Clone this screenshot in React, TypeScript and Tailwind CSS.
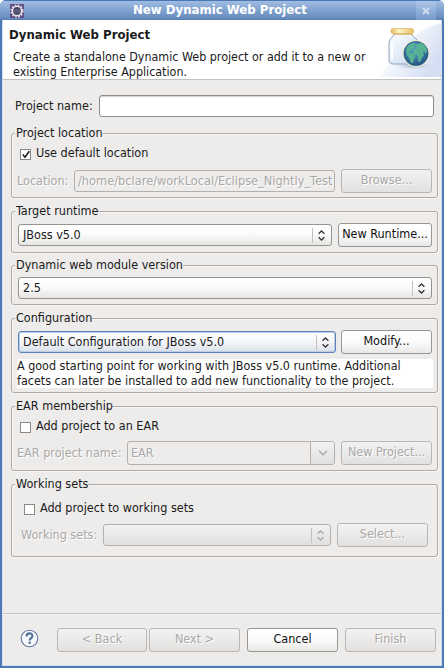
import React from "react";

type Kids = { children?: React.ReactNode };

function Group({ title, className, children }: Kids & { title: string; className: string }) {
  return (
    <section
      className={`ml-[8px] w-[427px] shrink-0 rounded-[3px] border border-[#adaaa7] shadow-[inset_1px_1px_0_#f7f6f5,1px_1px_0_#f7f6f5] ${className}`}
    >
      <h2 className="ml-[3px] -mt-[9px] h-[16px] w-fit bg-[#edeceb] pl-[1px] text-[12.5px] leading-[16px]">{title}</h2>
      {children}
    </section>
  );
}

function Button({ children, disabled, className }: Kids & { disabled?: boolean; className: string }) {
  return (
    <button
      className={`h-[24px] shrink-0 whitespace-nowrap rounded-[3px] border pb-[2px] text-center text-[12.5px] leading-[20px] ${
        disabled
          ? "border-[#b9b6b3] bg-linear-to-b from-[#f3f2f2] to-[#e2e1e0] text-[#aaa8a6] [text-shadow:1px_1px_0_#fff]"
          : "border-[#999693] bg-linear-to-b from-white via-[#fbfbfb] to-[#e9e8e7] text-[#111]"
      } ${className}`}
    >
      {children}
    </button>
  );
}

function Select({
  children,
  tone = "normal",
  className,
}: Kids & { tone?: "normal" | "focus" | "off"; className: string }) {
  const tones = {
    normal: "border-[#979490] bg-linear-to-b from-white via-[#fafafa] to-[#e6e5e4]",
    focus: "border-[#5c83b8] bg-linear-to-b from-white via-[#f4f6f9] to-[#d9dfe8] shadow-[inset_0_0_0_1px_#bccde5]",
    off: "border-[#b3b0ad] bg-linear-to-b from-[#f3f2f2] to-[#e1e0df]",
  };
  return (
    <div className={`flex h-[22px] shrink-0 items-center rounded-[3px] border pl-[4px] ${tones[tone]} ${className}`}>
      <span className="flex-1 whitespace-nowrap text-[12.5px] leading-[20px]">{children}</span>
      <span className="h-[15px] w-px bg-[#c2bfbd]" />
      <svg
        className="ml-[5px] mr-[6px]"
        width="7"
        height="11"
        viewBox="0 0 7 11"
        fill="none"
        stroke={tone === "off" ? "#aaa8a6" : "#333"}
        strokeWidth="1.3"
      >
        <path d="M0.6 3.8 3.5 1l2.9 2.8M0.6 7.2 3.5 10l2.9-2.8" />
      </svg>
    </div>
  );
}

function Check({ children, checked, className }: Kids & { checked?: boolean; className: string }) {
  return (
    <label className={`flex h-[16px] items-center gap-[5px] text-[12.5px] leading-[16px] ${className}`}>
      <span className="mt-[2px] flex h-[11px] w-[11px] items-center justify-center border border-[#8b8885] bg-white">
        {checked && (
          <svg className="shrink-0" width="8" height="9" viewBox="0 0 8 9" fill="none" stroke="#222" strokeWidth="1.6">
            <path d="M0.8 4.5 3 7.2 7.3 1.2" />
          </svg>
        )}
      </span>
      <span className="whitespace-nowrap">{children}</span>
    </label>
  );
}

function DimLabel({ children, className }: Kids & { className: string }) {
  return (
    <span
      className={`shrink-0 whitespace-nowrap leading-[22px] text-[#aaa8a6] [text-shadow:1px_1px_0_#fff] ${className}`}
    >
      {children}
    </span>
  );
}

function GearIcon() {
  return (
    <svg className="ml-[10px] shrink-0" width="14" height="14" viewBox="0 0 14 14">
      <rect width="14" height="14" fill="#5d4f86" />
      <circle cx="7" cy="7" r="5.9" fill="none" stroke="#e8e3ea" strokeWidth="1.5" strokeDasharray="1.7 1.39" />
      <circle cx="7" cy="7" r="4.6" fill="#4b4468" stroke="#efecef" strokeWidth="1.4" />
      <path d="M3.5 6h7M3.3 8h7.4" stroke="#76809e" strokeWidth="0.7" />
    </svg>
  );
}

function JarIcon() {
  return (
    <svg className="mt-[2px] shrink-0" width="62" height="56" viewBox="0 0 62 56">
      <defs>
        <linearGradient id="swoosh" x1="0" y1="0" x2="1" y2="0.6">
          <stop offset="0.3" stopColor="#fff" />
          <stop offset="1" stopColor="#d4def3" />
        </linearGradient>
        <linearGradient id="glass" x1="0" y1="0" x2="1" y2="1">
          <stop offset="0" stopColor="#fff" />
          <stop offset="0.3" stopColor="#eef4fb" />
          <stop offset="1" stopColor="#c3d7ec" />
        </linearGradient>
        <linearGradient id="lid" x1="0" y1="0" x2="1" y2="0">
          <stop offset="0" stopColor="#e2b65a" />
          <stop offset="0.35" stopColor="#fff6cc" />
          <stop offset="1" stopColor="#e6bd64" />
        </linearGradient>
        <radialGradient id="sea" cx="0.45" cy="0.35" r="0.7">
          <stop offset="0" stopColor="#5f9fc6" />
          <stop offset="1" stopColor="#1d4f80" />
        </radialGradient>
        <radialGradient id="ground">
          <stop offset="0" stopColor="#98a5bc" />
          <stop offset="1" stopColor="#dbe3f3" stopOpacity="0" />
        </radialGradient>
      </defs>
      <path d="M62 1C49 4 38 11 27 22 16 33 9 44 0 55h62z" fill="url(#swoosh)" />
      <g transform="translate(2 0)">
        <ellipse cx="33" cy="43.500" rx="20" ry="4.500" fill="url(#ground)" />
        <path
          d="M13 12h18c0 3 6 4 6 10v16c0 3-2 4-5 4H13c-3 0-5-1-5-4V22c0-6 5-7 5-10z"
          fill="url(#glass)"
          stroke="#8fa2bd"
        />
        <path d="M11 22v16" stroke="#fff" strokeWidth="2" />
        <rect x="12" y="10" width="20" height="3" rx="1" fill="#dcc086" />
        <rect x="10" y="6.500" width="22.500" height="5" rx="2" fill="url(#lid)" stroke="#dfb765" strokeWidth="0.8" />
        <circle cx="35" cy="31.500" r="13.5" fill="#f4f1d2" />
        <circle cx="35" cy="31.500" r="12.2" fill="url(#sea)" stroke="#2c5d84" strokeWidth="0.6" />
        <path
          d="M26 25c2-3 5-4 8-4l1 2-2 1 1 2-3 1-1 2h-2l1 2 3 0 3 3-2 3-1 4h-2l-2-5-2-3-1-3zM36 22l5-1c3 2 5 5 5 8l-1 3-2-3-1 2 1 2-2 3-2 4-2-1v-4l-1-2-3-1-1-3 2-2 2-1-1-2z"
          fill="#55b394"
        />
      </g>
    </svg>
  );
}

export default function App() {
  return (
    <div className="h-[668px] w-[444px] overflow-hidden bg-white font-['DejaVu_Sans_Condensed','DejaVu_Sans',sans-serif] [font-stretch:condensed] text-[12.5px] text-[#1a1a1a]">
      <div className="flex h-full w-full flex-col overflow-hidden rounded-t-[6px] bg-[#4c7ab5]">
        <header className="flex h-[20px] shrink-0 items-center border-t border-[#4a78b2] bg-linear-to-b from-[#a0bce2] to-[#6087ba] shadow-[inset_0_-1px_0_#587fb3]">
          <GearIcon />
          <h1 className="ml-[24px] flex-1 pb-px pl-[85px] font-['DejaVu_Sans',sans-serif] text-[11.75px] leading-[16px] font-bold whitespace-nowrap text-white [font-stretch:normal]">
            New Dynamic Web Project
          </h1>
          <span className="mr-[8px] flex h-[19px] w-[20px] items-center justify-center bg-linear-to-b from-[#adc6e8] to-[#769bcb]">
            <svg width="8" height="8" viewBox="0 0 8 8" stroke="#cfdcf0" strokeWidth="2.2">
              <path d="M1 1l6 6M7 1 1 7" />
            </svg>
          </span>
        </header>

        <div className="mr-[2px] mb-[2px] ml-[2px] flex min-h-0 flex-1 flex-col border-x border-b border-[#d5dfec] bg-[#edeceb]">
          <div className="flex h-[60px] shrink-0 justify-between border-b border-[#c4c2c0] bg-white">
            <div className="pt-[7px] pl-[6px]">
              <h2 className="font-['DejaVu_Sans',sans-serif] text-[11.75px] leading-[16px] font-bold whitespace-nowrap [font-stretch:normal]">
                Dynamic Web Project
              </h2>
              <p className="mt-[7px] ml-[4px] text-[12.4px] leading-[14.5px] whitespace-nowrap">
                Create a standalone Dynamic Web project or add it to a new or
                <br />
                existing Enterprise Application.
              </p>
            </div>
            <JarIcon />
          </div>

          <div className="mt-[15px] flex h-[22px] shrink-0 items-center">
            <span className="w-[96px] pb-px pl-[12px] leading-[20px] whitespace-nowrap">Project name:</span>
            <span className="h-[22px] w-[335px] rounded-[3px] border border-[#8e8b88] bg-white shadow-[inset_0_1px_0_#d6d4d2]" />
          </div>

          <Group title="Project location" className="mt-[16px] h-[65px]">
            <Check checked className="mt-[4px] ml-[8px]">
              Use default location
            </Check>
            <div className="mt-[8px] ml-[5px] flex h-[24px] items-center">
              <DimLabel className="w-[57px] pb-px">Location:</DimLabel>
              <div className="flex h-[22px] w-[261px] items-center overflow-hidden rounded-[3px] border border-[#b3b0ad] pl-[3px]">
                <DimLabel className="pb-px text-[12.7px]">/home/bclare/workLocal/Eclipse_Nightly_Test</DimLabel>
              </div>
              <Button disabled className="ml-[6px] w-[91px]">
                Browse...
              </Button>
            </div>
          </Group>

          <Group title="Target runtime" className="mt-[13px] h-[42px]">
            <div className="mt-[4px] ml-[6px] flex h-[24px] items-center">
              <Select className="w-[314px]">JBoss v5.0</Select>
              <Button className="ml-[6px] w-[94px]">New Runtime...</Button>
            </div>
          </Group>

          <Group title="Dynamic web module version" className="mt-[12px] h-[40px]">
            <Select className="mt-[4px] ml-[6px] w-[414px]">2.5</Select>
          </Group>

          <Group title="Configuration" className="mt-[13px] h-[75px]">
            <div className="mt-[4px] ml-[6px] flex h-[24px] items-center">
              <Select tone="focus" className="w-[318px]">
                Default Configuration for JBoss v5.0
              </Select>
              <Button className="ml-[5px] w-[91px]">Modify...</Button>
            </div>
            <p className="mt-[5px] ml-[5px] h-[29px] w-[416px] bg-white text-[12.43px] leading-[14.5px] whitespace-nowrap">
              A good starting point for working with JBoss v5.0 runtime. Additional
              <br />
              facets can later be installed to add new functionality to the project.
            </p>
          </Group>

          <Group title="EAR membership" className="mt-[13px] h-[65px]">
            <Check className="mt-[4px] ml-[8px]">Add project to an EAR</Check>
            <div className="mt-[7px] ml-[5px] flex h-[24px] items-center">
              <DimLabel className="w-[110px] pb-px">EAR project name:</DimLabel>
              <div className="flex h-[24px] w-[208px] items-stretch overflow-hidden rounded-[3px] border border-[#b3b0ad] pl-[3px]">
                <DimLabel className="flex-1">EAR</DimLabel>
                <span className="flex w-[24px] items-center justify-center border-l border-[#b3b0ad] bg-linear-to-b from-[#f3f2f2] to-[#e1e0df]">
                  <svg width="10" height="6" viewBox="0 0 10 6" fill="none" stroke="#aaa8a6" strokeWidth="1.5">
                    <path d="M1 0.8l4 4 4-4" />
                  </svg>
                </span>
              </div>
              <Button disabled className="ml-[6px] w-[91px]">
                New Project...
              </Button>
            </div>
          </Group>

          <Group title="Working sets" className="mt-[13px] h-[73px]">
            <Check className="mt-[8px] ml-[12px]">Add project to working sets</Check>
            <div className="mt-[7px] ml-[9px] flex h-[24px] items-center">
              <DimLabel className="w-[82px] pb-px">Working sets:</DimLabel>
              <Select tone="off" className="w-[228px]" />
              <Button disabled className="ml-[6px] w-[91px]">
                Select...
              </Button>
            </div>
          </Group>

          <footer className="mt-auto flex h-[52px] shrink-0 items-start border-t border-[#c4c2c0] pt-[14px] pl-[17px] shadow-[inset_0_1px_0_#f8f8f7]">
            <svg className="mt-[1px] shrink-0" width="19" height="19" viewBox="0 0 19 19" fill="none">
              <circle cx="9.5" cy="9.500" r="8.300" fill="#f8f9fb" stroke="#62799e" strokeWidth="1.100" />
              <path d="M6.600 7.500C6.600 3.300 12.500 3.500 12.400 7c0 2.100-2.700 2.200-2.700 4.500" stroke="#536f9c" strokeWidth="2.100" />
              <circle cx="9.700" cy="13.800" r="1.300" fill="#536f9c" />
            </svg>
            <Button disabled className="ml-[18px] w-[90px]">
              &lt; Back
            </Button>
            <Button disabled className="ml-[2px] w-[91px]">
              Next &gt;
            </Button>
            <Button className="ml-[7px] w-[91px]">Cancel</Button>
            <Button disabled className="ml-[7px] w-[91px]">
              Finish
            </Button>
          </footer>
        </div>
      </div>
    </div>
  );
}
